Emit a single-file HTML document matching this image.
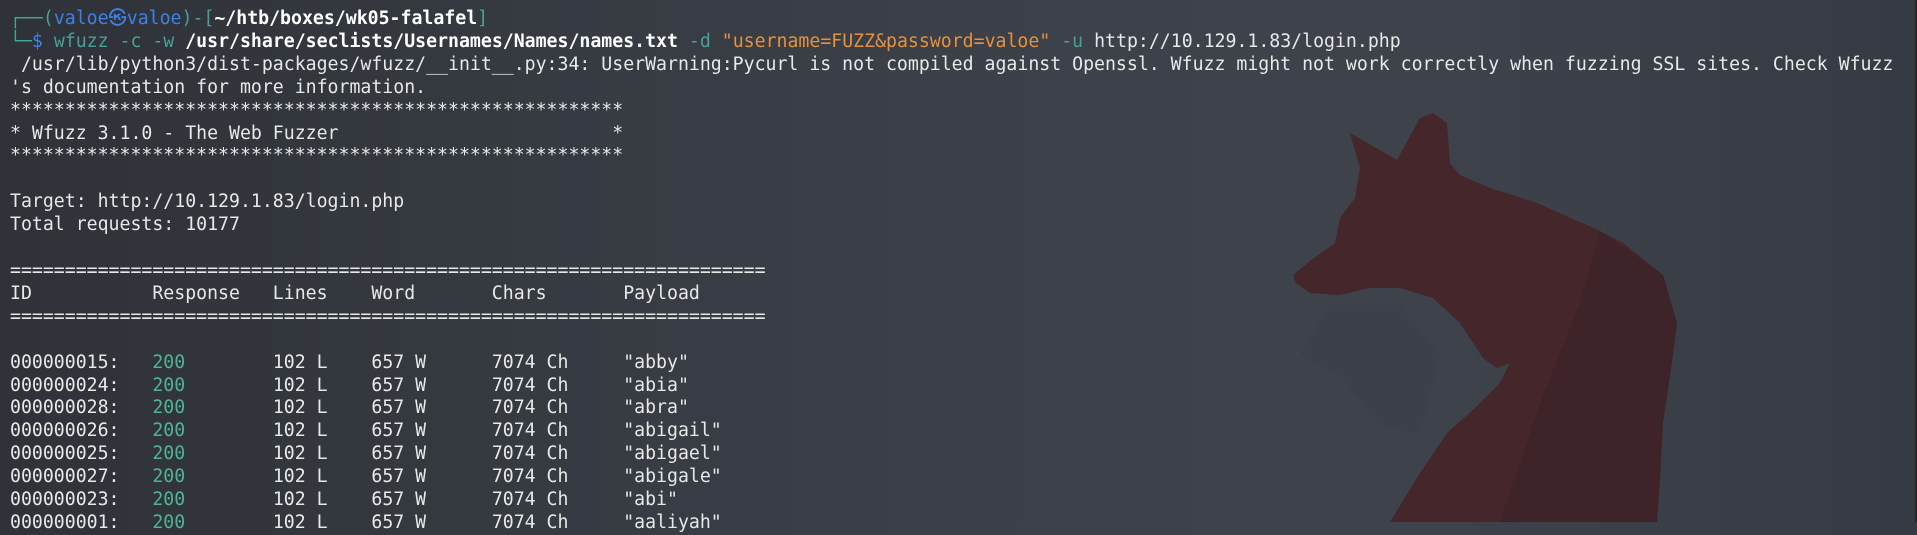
<!DOCTYPE html>
<html><head><meta charset="utf-8">
<style>
html,body{margin:0;padding:0;}
body{width:1917px;height:522px;overflow:hidden;position:relative;
background:linear-gradient(90deg,#2f3238 0%,#353940 25%,#3d414a 55%,#3e424b 75%,#363a42 100%);}
svg{position:absolute;left:0;top:0;}
pre{position:absolute;left:10px;top:8px;margin:0;font-family:"DejaVu Sans Mono","Liberation Mono","Noto Sans CJK JP",monospace;font-size:18.2px;line-height:22.9px;color:#e8e8e8;white-space:pre;}
.t{color:#45a296}.b{color:#3d82e6}.w{color:#fff;font-weight:bold}.o{color:#e8913c}.g{color:#4fb394}
.edge{position:absolute;right:0;top:0;width:2px;height:522px;background:#25272d}
</style></head><body>
<svg width="1917" height="522">
<polygon fill="#3a3f48" opacity="0.6" points="1330,305 1400,305 1440,355 1420,435 1380,425 1340,375 1300,355"/>
<polygon fill="#44262b" points="1350,133 1397,160 1420,118 1433,113 1447,123 1450,163 1460,175 1490,188 1537,203 1600,231 1623,243 1663,275 1677,323 1672,363 1663,423 1660,483 1657,522 1390,522 1420,473 1447,433 1475,408 1500,383 1510,363 1497,368 1483,358 1460,323 1433,298 1400,288 1370,288 1340,295 1310,293 1296,283 1293,275 1310,261 1335,243 1340,218 1355,198 1360,168"/>
<polygon fill="#3b2226" opacity="0.6" points="1600,231 1663,275 1677,323 1663,423 1657,522 1500,522 1540,403 1580,303"/>
</svg>
<div class="edge"></div>
<pre><span class="t">┌──(</span><span class="b">valoe㉿valoe</span><span class="t">)-[</span><span class="w">~/htb/boxes/wk05-falafel</span><span class="t">]</span>
<span class="t">└─</span><span class="b">$</span> <span class="t">wfuzz -c -w</span> <span class="w">/usr/share/seclists/Usernames/Names/names.txt</span> <span class="t">-d</span> <span class="o">"username=FUZZ&amp;password=valoe"</span> <span class="t">-u</span> http://10.129.1.83/login.php
 /usr/lib/python3/dist-packages/wfuzz/__init__.py:34: UserWarning:Pycurl is not compiled against Openssl. Wfuzz might not work correctly when fuzzing SSL sites. Check Wfuzz
's documentation for more information.
********************************************************
* Wfuzz 3.1.0 - The Web Fuzzer                         *
********************************************************

Target: http://10.129.1.83/login.php
Total requests: 10177

=====================================================================
ID           Response   Lines    Word       Chars       Payload
=====================================================================

000000015:   <span class="g">200</span>        102 L    657 W      7074 Ch     "abby"
000000024:   <span class="g">200</span>        102 L    657 W      7074 Ch     "abia"
000000028:   <span class="g">200</span>        102 L    657 W      7074 Ch     "abra"
000000026:   <span class="g">200</span>        102 L    657 W      7074 Ch     "abigail"
000000025:   <span class="g">200</span>        102 L    657 W      7074 Ch     "abigael"
000000027:   <span class="g">200</span>        102 L    657 W      7074 Ch     "abigale"
000000023:   <span class="g">200</span>        102 L    657 W      7074 Ch     "abi"
000000001:   <span class="g">200</span>        102 L    657 W      7074 Ch     "aaliyah"
</pre>
</body></html>
